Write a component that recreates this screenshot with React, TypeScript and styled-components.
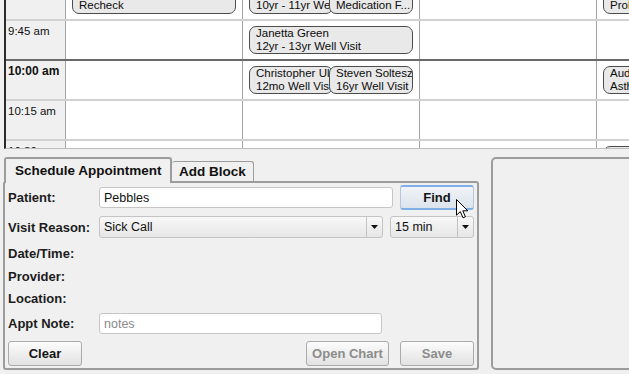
import React from 'react';
import styled, { createGlobalStyle } from 'styled-components';

type Appt = { name?: string; reason: string };
type Slot = { time: string; hour?: boolean; cols: Appt[][] };

// first row is scrolled half out of view, so only the visit reason shows
const slots: Slot[] = [
  {
    time: '9:30 am',
    cols: [
      [{ reason: 'Recheck' }],
      [{ reason: '10yr - 11yr Well Visit' }, { reason: 'Medication F...' }],
      [],
      [{ reason: 'Problem Visit' }],
    ],
  },
  {
    time: '9:45 am',
    cols: [[], [{ name: 'Janetta Green', reason: '12yr - 13yr Well Visit' }], [], []],
  },
  {
    time: '10:00 am',
    hour: true,
    cols: [
      [],
      [
        { name: 'Christopher Uleman', reason: '12mo Well Visit' },
        { name: 'Steven Soltesz', reason: '16yr Well Visit' },
      ],
      [],
      [{ name: 'Audrey Lane', reason: 'Asthma Check' }],
    ],
  },
  { time: '10:15 am', cols: [[], [], [], []] },
  {
    time: '10:30',
    cols: [[], [], [], [{ reason: '' }]],
  },
];

const GlobalStyle = createGlobalStyle`
  html, body {
    margin: 0;
    padding: 0;
  }

  body {
    background: #f0f0f0;
    font-family: "Liberation Sans", Arial, sans-serif;
    color: #111;
  }
`;

export default function App() {
  return (
    <Page>
      <GlobalStyle />
      <Calendar>
        <ScrollContent>
          {slots.map((slot) => (
            <SlotRow key={slot.time} $hour={slot.hour}>
              <TimeCell $hour={slot.hour}>{slot.time}</TimeCell>
              {slot.cols.map((appts, i) => (
                <DayCell key={i}>
                  {appts.map((a, j) => (
                    <ApptBox key={j}>
                      {a.name && <ApptLine>{a.name}</ApptLine>}
                      {a.reason && <ApptLine>{a.reason}</ApptLine>}
                    </ApptBox>
                  ))}
                </DayCell>
              ))}
            </SlotRow>
          ))}
        </ScrollContent>
      </Calendar>

      <Lower>
        <LeftColumn>
          <TabBar>
            <Tab $active>Schedule Appointment</Tab>
            <Tab>Add Block</Tab>
          </TabBar>

          <Panel>
            <FieldRow $h={25}>
              <Label>Patient:</Label>
              <TextInput $w={294} defaultValue="Pebbles" readOnly />
              <Button $w={74} $focus>
                Find
              </Button>
            </FieldRow>

            <FieldRow $h={22} $mt={6}>
              <Label>Visit Reason:</Label>
              <Select $w={284}>
                <SelectValue>Sick Call</SelectValue>
                <SelectArrow>
                  <ArrowIcon />
                </SelectArrow>
              </Select>
              <Select $w={84}>
                <SelectValue>15 min</SelectValue>
                <SelectArrow>
                  <ArrowIcon />
                </SelectArrow>
              </Select>
            </FieldRow>

            <FieldRow $h={22} $mt={4}>
              <Label>Date/Time:</Label>
            </FieldRow>
            <FieldRow $h={22} $mt={1}>
              <Label>Provider:</Label>
            </FieldRow>
            <FieldRow $h={22}>
              <Label>Location:</Label>
            </FieldRow>

            <FieldRow $h={21} $mt={4}>
              <Label>Appt Note:</Label>
              <TextInput $w={283} placeholder="notes" readOnly />
            </FieldRow>

            <ButtonRow>
              <Button $w={74}>Clear</Button>
              <Spacer />
              <Button $w={83} $disabled>
                Open Chart
              </Button>
              <Button $w={74} $disabled>
                Save
              </Button>
            </ButtonRow>
          </Panel>
        </LeftColumn>

        <SidePanel />
      </Lower>

      <Cursor>
        <svg width="13" height="20" viewBox="0 0 13 20">
          <path
            d="M0.5 0.5 L0.5 16.2 L4.3 12.6 L7 18.8 L9.4 17.8 L6.8 11.8 L11.8 11.8 Z"
            fill="#fff"
            stroke="#000"
            strokeWidth="1"
            strokeLinejoin="round"
          />
        </svg>
      </Cursor>
    </Page>
  );
}

const ArrowIcon = () => (
  <svg width="7" height="4" viewBox="0 0 7 4">
    <path d="M0 0 L7 0 L3.5 4 Z" fill="#111" />
  </svg>
);

const Page = styled.div`
  position: relative;
  width: 629px;
  height: 374px;
  overflow: hidden;
  background: #f0f0f0;
`;

const Calendar = styled.div`
  height: 148px;
  margin-left: 4px;
  overflow: hidden;
  background: #fff;
  border-left: 2px solid #2b2b2b;
  border-bottom: 1px solid #bcbcbc;
`;

const ScrollContent = styled.div`
  margin-top: -21px;
`;

const SlotRow = styled.div<{ $hour?: boolean }>`
  display: grid;
  grid-template-columns: 60px repeat(4, 177px);
  height: 40px;
  box-sizing: border-box;
  border-top: 2px solid ${(p) => (p.$hour ? '#6a6a6a' : '#d2d2d2')};
`;

const TimeCell = styled.div<{ $hour?: boolean }>`
  padding: 3px 0 0 2px;
  background: #f0f0f0;
  border-right: 1px solid #a4a4a4;
  font-size: ${(p) => (p.$hour ? '12px' : '11.5px')};
  font-weight: ${(p) => (p.$hour ? 'bold' : 'normal')};
  line-height: 14px;
  white-space: nowrap;
`;

const DayCell = styled.div`
  display: flex;
  padding: 5px 6px 0 6px;
  border-right: 1px solid #a4a4a4;
  min-width: 0;
`;

const ApptBox = styled.div`
  flex: 1;
  min-width: 0;
  display: flex;
  flex-direction: column;
  justify-content: flex-end;
  height: 28px;
  box-sizing: border-box;
  padding: 0 0 1px 6px;
  border: 1px solid #4c4c4c;
  border-radius: 7px;
  background: #e9e9e9;
  overflow: hidden;

  & + & {
    margin-left: -4px;
  }
`;

const ApptLine = styled.div`
  font-size: 11.5px;
  line-height: 13px;
  color: #0c0c0c;
  white-space: nowrap;
  overflow: hidden;
`;

const Lower = styled.div`
  display: flex;
  gap: 12px;
  padding: 8px 0 0 3px;
`;

const LeftColumn = styled.div`
  display: flex;
  flex-direction: column;
  width: 476px;
`;

const TabBar = styled.div`
  position: relative;
  z-index: 1;
  display: flex;
  align-items: flex-start;
  height: 24px;
  margin-left: 1px;
`;

const Tab = styled.div<{ $active?: boolean }>`
  display: flex;
  align-items: center;
  box-sizing: border-box;
  height: ${(p) => (p.$active ? '26px' : '20px')};
  margin-top: ${(p) => (p.$active ? '0' : '4px')};
  padding: ${(p) => (p.$active ? '0 0 2px 9px' : '0 0 0 7px')};
  width: ${(p) => (p.$active ? '168px' : '82px')};
  background: #f0f0f0;
  border: ${(p) => (p.$active ? '2px' : '1px')} solid #9c9c9c;
  border-bottom: none;
  border-left-width: ${(p) => (p.$active ? '2px' : '0')};
  border-radius: 3px 3px 0 0;
  font-size: 13.5px;
  font-weight: bold;
  white-space: nowrap;
`;

const Panel = styled.div`
  display: flex;
  flex-direction: column;
  box-sizing: border-box;
  height: 189px;
  padding: 2px 3px 0 3px;
  border: 2px solid #9c9c9c;
  border-radius: 3px;
`;

const FieldRow = styled.div<{ $h: number; $mt?: number }>`
  display: flex;
  align-items: center;
  gap: 7px;
  height: ${(p) => p.$h}px;
  margin-top: ${(p) => p.$mt ?? 0}px;
`;

const Label = styled.div`
  width: 84px;
  flex-shrink: 0;
  font-size: 13px;
  font-weight: bold;
  color: #1c1c1c;
  white-space: nowrap;
`;

const TextInput = styled.input<{ $w: number }>`
  width: ${(p) => p.$w}px;
  height: 21px;
  box-sizing: border-box;
  padding: 0 4px;
  border: 1px solid #c6c6c6;
  border-radius: 3px;
  background: #fff;
  font-family: "Liberation Sans", Arial, sans-serif;
  font-size: 12.5px;
  color: #111;
  outline: none;

  &::placeholder {
    color: #8a8a8a;
  }
`;

const Select = styled.div<{ $w: number }>`
  display: flex;
  width: ${(p) => p.$w}px;
  height: 22px;
  box-sizing: border-box;
  border: 1px solid #c4c4c4;
  border-radius: 3px;
  background: linear-gradient(#f8f8f8, #e6e6e6);
`;

const SelectValue = styled.div`
  flex: 1;
  display: flex;
  align-items: center;
  padding-left: 4px;
  font-size: 12.5px;
  white-space: nowrap;
`;

const SelectArrow = styled.div`
  display: flex;
  align-items: center;
  justify-content: center;
  width: 15px;
  border-left: 1px solid #c4c4c4;
`;

const Button = styled.button<{ $w: number; $disabled?: boolean; $focus?: boolean }>`
  width: ${(p) => p.$w}px;
  height: 25px;
  box-sizing: border-box;
  padding: 0;
  border: 1px solid ${(p) => (p.$focus ? '#b8c6d8' : '#ababab')};
  border-top: ${(p) => (p.$focus ? '2px solid #80aee6' : '1px solid #ababab')};
  border-bottom: ${(p) => (p.$focus ? '2px solid #80aee6' : '1px solid #ababab')};
  border-radius: 3px;
  background: ${(p) =>
    p.$focus
      ? 'linear-gradient(#f1f4f8, #dce3ec)'
      : 'linear-gradient(#fcfcfc, #e2e2e2)'};
  font-family: "Liberation Sans", Arial, sans-serif;
  font-size: 13px;
  font-weight: bold;
  color: ${(p) => (p.$disabled ? '#8c8c8c' : '#141414')};
  white-space: nowrap;
`;

const ButtonRow = styled.div`
  display: flex;
  align-items: center;
  gap: 11px;
  height: 25px;
  margin-top: 7px;
`;

const Spacer = styled.div`
  flex: 1;
`;

const SidePanel = styled.div`
  flex: 1;
  height: 213px;
  box-sizing: border-box;
  margin-right: -10px;
  border: 2px solid #9c9c9c;
  border-radius: 5px;
`;

const Cursor = styled.div`
  position: absolute;
  left: 456px;
  top: 199px;
  line-height: 0;
  pointer-events: none;
`;
